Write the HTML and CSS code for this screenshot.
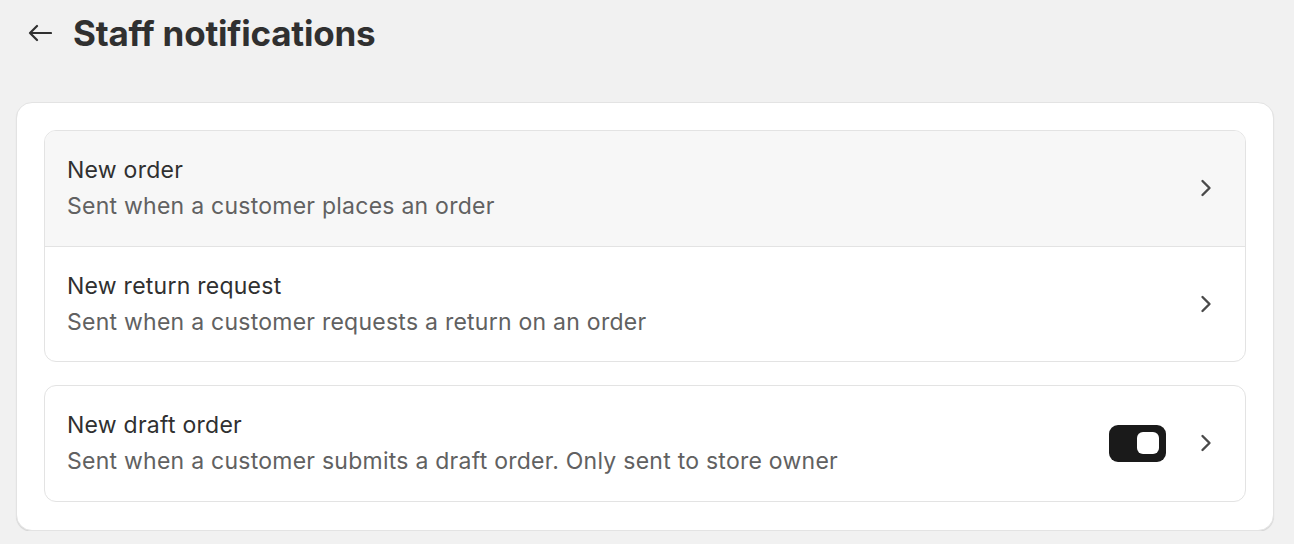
FILE: index.html
```html
<!DOCTYPE html>
<html lang="en">
<head>
<meta charset="utf-8">
<title>Staff notifications</title>
<link rel="stylesheet" href="styles.css">
</head>
<body>
<div class="page">
  <header class="page-header">
    <button class="back" aria-label="Back">
      <svg width="24" height="18" viewBox="0 0 24 18" fill="none" stroke="#303030" stroke-width="2.2" stroke-linecap="round" stroke-linejoin="round">
        <path d="M23 9H2M9 2L2 9l7 7"/>
      </svg>
    </button>
    <h1 class="title">Staff notifications</h1>
  </header>

  <section class="card">
    <div class="group">
      <a class="row row-hover" href="#">
        <div class="row-text">
          <div class="row-title">New order</div>
          <div class="row-sub">Sent when a customer places an order</div>
        </div>
        <svg class="chev" width="12" height="18" viewBox="0 0 12 18" fill="none" stroke="#4a4a4a" stroke-width="2.4" stroke-linecap="round" stroke-linejoin="round"><path d="M2.5 2l7 7-7 7"/></svg>
      </a>
      <a class="row row-divided" href="#">
        <div class="row-text">
          <div class="row-title">New return request</div>
          <div class="row-sub">Sent when a customer requests a return on an order</div>
        </div>
        <svg class="chev" width="12" height="18" viewBox="0 0 12 18" fill="none" stroke="#4a4a4a" stroke-width="2.4" stroke-linecap="round" stroke-linejoin="round"><path d="M2.5 2l7 7-7 7"/></svg>
      </a>
    </div>

    <div class="group">
      <a class="row" href="#">
        <div class="row-text">
          <div class="row-title">New draft order</div>
          <div class="row-sub">Sent when a customer submits a draft order. Only sent to store owner</div>
        </div>
        <span class="toggle" role="switch" aria-checked="true"><span class="knob"></span></span>
        <svg class="chev" width="12" height="18" viewBox="0 0 12 18" fill="none" stroke="#4a4a4a" stroke-width="2.4" stroke-linecap="round" stroke-linejoin="round"><path d="M2.5 2l7 7-7 7"/></svg>
      </a>
    </div>
  </section>
</div>
</body>
</html>
```

FILE: styles.css
```css
* { box-sizing: border-box; }
html, body { margin: 0; padding: 0; }
body {
  background: #f1f1f1;
  font-family: Inter, "Noto Sans", "Liberation Sans", sans-serif;
  color: #303030;
}
.page {
  padding: 0 20px 0 16px;
}
.page-header {
  display: flex;
  align-items: center;
  height: 66px;
  gap: 20px;
  padding-left: 12px;
  margin-bottom: 36px;
}
.back {
  border: 0;
  background: none;
  padding: 0;
  display: flex;
  width: 25px;
  cursor: pointer;
}
.title {
  margin: 0;
  font-size: 35px;
  font-weight: 700;
  letter-spacing: -0.22px;
  color: #303030;
  line-height: 40px;
}
.card {
  background: #fff;
  border-radius: 16px;
  border: 1px solid #e3e3e3;
  box-shadow: 0 1px 1px rgba(0,0,0,0.12);
  padding: 27px 27px 28px;
  display: flex;
  flex-direction: column;
  gap: 23px;
}
.group {
  border: 1px solid #e3e3e3;
  border-radius: 12px;
  overflow: hidden;
}
.row {
  display: flex;
  align-items: center;
  padding: 20px 33px 21px 22px;
  text-decoration: none;
  color: inherit;
  min-height: 115px;
}
.row-hover { background: #f7f7f7; }
.row-divided { border-top: 1px solid #e3e3e3; }
.row-text { flex: 1; }
.row-title {
  font-size: 23px;
  letter-spacing: 0.25px;
  line-height: 36px;
  color: #303030;
}
.row-sub {
  font-size: 23px;
  letter-spacing: 0.25px;
  line-height: 36px;
  color: #616161;
}
.chev { flex: none; }
.toggle {
  flex: none;
  width: 57px;
  height: 37px;
  border-radius: 9px;
  background: #1a1a1a;
  margin-right: 34px;
  display: flex;
  align-items: center;
  justify-content: flex-end;
  padding-right: 7px;
}
.knob {
  width: 22px;
  height: 22px;
  border-radius: 6px;
  background: #fff;
}
```
